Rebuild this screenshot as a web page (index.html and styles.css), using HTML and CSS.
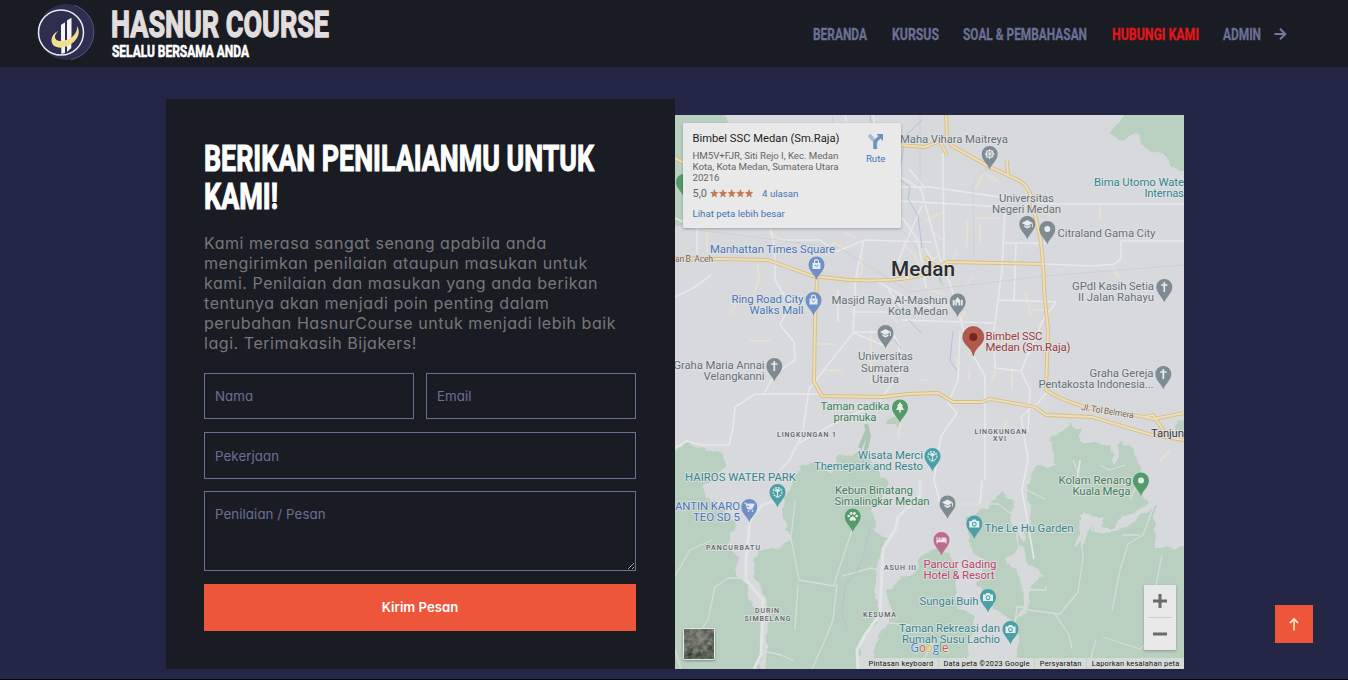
FILE: index.html
```html
<!DOCTYPE html>
<html lang="id">
<head>
<meta charset="utf-8">
<title>Hasnur Course</title>
<link rel="stylesheet" href="styles.css">
</head>
<body>
<header class="navbar">
  <a class="brand">
    <svg class="brand-logo" viewBox="0 0 56 56">
      <circle cx="28" cy="28" r="28" fill="#2d2f52"/>
      <path d="M36 1.200A28 28 0 0 1 33 55.500" fill="none" stroke="#555975" stroke-width="1"/>
      <circle cx="23" cy="28.500" r="22.500" fill="#2d2e50" stroke="#eeeef2" stroke-width="1.500"/>
      <path d="M23.300 50V21L27 18.500V49ZM29 48V16.500L33.300 14V44Z" fill="#f5f5f8"/>
      <path d="M23 21L27 18.500V35L23 37ZM29 17L33.300 14V32L29 35Z" fill="#f5f5f8"/>
      <path d="M20.500 27C12 30 10.500 42 20.500 43.500C31 45 46 33 39 22C40 31 31 36.500 23 37C16 37.500 15 31 20.500 27Z" fill="#efdf91"/>
    </svg>
    <svg class="brand-text" viewBox="0 0 220 56">
      <text class="brand-name" x="-1" y="33" textLength="218" lengthAdjust="spacingAndGlyphs">HASNUR COURSE</text>
      <text class="brand-tag" x="0" y="53" textLength="137" lengthAdjust="spacingAndGlyphs">SELALU BERSAMA ANDA</text>
    </svg>
  </a>
  <nav class="menu">
    <a><svg width="54" height="24"><text y="18" textLength="54" lengthAdjust="spacingAndGlyphs">BERANDA</text></svg></a>
    <a><svg width="47" height="24"><text y="18" textLength="47" lengthAdjust="spacingAndGlyphs">KURSUS</text></svg></a>
    <a><svg width="124" height="24"><text y="18" textLength="124" lengthAdjust="spacingAndGlyphs">SOAL &amp; PEMBAHASAN</text></svg></a>
    <a class="active"><svg width="87" height="24"><text y="18" textLength="87" lengthAdjust="spacingAndGlyphs">HUBUNGI KAMI</text></svg></a>
    <a class="admin"><svg width="38" height="24"><text y="18" textLength="38" lengthAdjust="spacingAndGlyphs">ADMIN</text></svg>
      <svg class="arrow" width="12" height="12" viewBox="0 0 12 12"><path d="M.5 6H11M6 .7L11.300 6L6 11.300"/></svg></a>
  </nav>
</header>
<main class="contact">
  <section class="panel">
    <h1><svg width="432" height="76">
      <text x="0" y="34" textLength="390" lengthAdjust="spacingAndGlyphs">BERIKAN PENILAIANMU UNTUK</text>
      <text x="0" y="72" textLength="74" lengthAdjust="spacingAndGlyphs">KAMI!</text></svg></h1>
    <p class="lead">Kami merasa sangat senang apabila anda<br>mengirimkan penilaian ataupun masukan untuk<br>kami. Penilaian dan masukan yang anda berikan<br>tentunya akan menjadi poin penting dalam<br>perubahan HasnurCourse untuk menjadi lebih baik<br>lagi. Terimakasih Bijakers!</p>
    <form class="form">
      <div class="row"><input placeholder="Nama"><input placeholder="Email"></div>
      <input class="job" placeholder="Pekerjaan">
      <textarea placeholder="Penilaian / Pesan"></textarea>
      <button type="button">Kirim Pesan</button>
    </form>
  </section>
  <section class="map">
    <svg class="map-canvas" viewBox="675 115 509 554">
      <defs>
        <filter id="coast" x="-5%" y="-5%" width="110%" height="110%"><feTurbulence type="fractalNoise" baseFrequency=".09" numOctaves="2" seed="4"/><feDisplacementMap in="SourceGraphic" scale="9" xChannelSelector="R" yChannelSelector="G"/></filter>
        <path id="pin" d="M0 15.500C-1.500 10-8 6.500-8 0A8 8 0 0 1 8 0C8 6.500 1.500 10 0 15.500Z"/>
        <path id="cross" d="M0-5V5M-3.200-2H3.200" stroke="#e8ebec" stroke-width="1.700"/>
        <path id="hat" d="M-5.500-1L0-4L5.500-1L0 2ZM-3 1V3L0 4.500L3 3V1L0 2.800ZM4.600-.5H5.500V3H4.600Z" fill="#e8ebec"/>
        <g id="bag" fill="#e4e9f2"><path d="M-4-1.500H4V4.500H-4Z"/><path d="M-2-1.500V-3A2 1.800 0 0 1 2-3V-1.500" fill="none" stroke="#e4e9f2" stroke-width="1.200"/><path d="M-1.800.5Q0 3 1.800.5" fill="none" stroke="#6f8fc5"/></g>
        <g id="camera"><path d="M-5-2.500H-2.500L-1.500-4H1.500L2.500-2.500H5V4H-5Z" fill="#e3eeee"/><circle cy=".7" r="1.900" fill="none" stroke="#4ba0a8" stroke-width="1.100"/></g>
        <g id="palm" fill="none" stroke="#dcecec" stroke-width="1.100"><circle r="4.500" stroke-dasharray="2 1"/><path d="M0 5V-3M0 0L-3-2M0 0L3-2M-2-4L0-1L2-4M-2 5H2"/></g>
      </defs>
      <rect x="675" y="115" width="509" height="554" fill="#d7d9dc"/>
      <g fill="#b9cfc0" filter="url(#coast)">
        <path d="M665 105H724L728 128V225H665Z"/>
        <path d="M1126 105L1122 118L1109 134L1119 139L1138 134L1144 148L1161 152L1178 171L1195 170V105Z"/>
        <path d="M665 456L687 442L706 450L724 454L726 466L715 479L704 488L710 500L735 521L728 544L738 555L737 575L747 585L751 605L763 614L759 675H665Z"/>
        <path d="M790 486L800 466L816 463L832 472L838 457L858 452L873 466L888 485L873 510L876 532L888 538L878 561L874 589L881 616L861 641L855 680H765L768 620L766 594L752 575L758 552L778 548L791 538L782 515Z"/>
        <path d="M878 635L895 614L886 594L894 580L914 572L925 551L943 548L958 568L956 605L973 616L965 680H868Z"/>
        <path d="M966 518L987 509L1000 491L1013 501L1010 520L1023 544L1006 560L1020 579L1025 607L1010 620L989 605L977 584L984 564L970 548Z"/>
        <path d="M1070 424L1080 428L1081 441L1110 445L1115 464L1120 443L1132 446L1141 470L1137 487L1147 503L1140 512L1122 514L1112 530L1082 520L1075 546L1085 565L1076 550L1086 522L1103 533L1126 529L1155 503L1155 548L1195 547V680H1015L1018 641L1010 620L1028 612L1030 585L1044 575L1031 565L1021 544L1032 517L1025 493L1034 468L1057 464L1050 440Z"/>
        <path d="M1080 516L1090 513L1106 520L1100 528L1090 525L1081 548Z" fill="#d7d9dc"/>
        <path d="M886 418L898 415L902 426H886ZM1178 420H1190V434H1175ZM936 280L940 276L941 286Z"/>
      </g>
      <path d="M866 424L869 436L865 453M860 448L867 431" stroke="#a9c5b2" stroke-width="4" fill="none"/>
      <g class="blocks">
        <path d="M758 265L759 280L750 305M740 299L730 314M770 232L781 239L783 243M707 252V230M817 249L835 243L846 250M845 233L855 238M862 248V272L852 285M903 244L914 254L921 270M749 341H771M828 371H838M871 329V385M865 356L875 361M835 344H814M842 370H823M885 311L899 323M921 380H928M901 420L898 438M983 174L975 190M986 174L997 181M925 220L944 212M930 228L942 240M967 221V247M976 218H1000M980 224V242M957 250L950 269M940 255L929 261M973 276L964 287M1025 292L1031 316M965 311L960 324M1033 310H1047M940 309L955 303M930 289L945 295M969 370V380M996 370L991 383M1012 367V390M1100 202V220M1112 266L1119 278M1160 461L1170 450M955 357L960 371M900 350L910 354M1007 420L1003 432M862 198V210M862 130L871 125M770 172L790 165"/>
      </g>
      <g class="roads">
        <path d="M697 227V254M770 228L775 248V280L790 305L780 325L794 342L795 360L774 375L764 394M675 448L687 441L701 445L729 445L733 428L735 407L755 394H822M775 240H820L835 252L865 240L932 242M864 240L856 276L853 333L809 389L803 430L799 441L789 461L780 470M799 443L837 422L878 403L900 373L899 344L892 332H853M854 333L885 346M675 297L695 287L711 275M845 115L849 135L865 172L869 190L904 220L918 240L926 288M873 115L882 166L921 189L941 262L949 281L958 309L964 332L974 357L985 376V480M901 187L930 187L1048 204H1184M901 201L1005 207L1002 270L994 330L995 368L1021 371L1043 320L1056 302L998 300M943 153L944 260M1005 243L1048 243M1016 243L1014 300M1045 264L1092 266L1115 264L1121 258V241H1184M909 169L925 188M901 320L994 323M960 332L958 380L948 403L957 413L941 436L934 480L940 503M1035 404L1021 417L1028 459L1022 490L1034 559M1021 371L1030 390L1028 432M1048 391L1033 409M875 280L906 298L936 310M675 218L700 230M891 279L907 240L922 205M925 248L936 265M982 481L980 504H952M1080 460L1076 490M838 290V322M852 312L885 312M888 289L904 312L917 318"/>
        <path class="major" d="M777 500L762 505L750 520L746 560V580L763 600L761 655L754 669M920 480L920 496L898 517L896 528L883 549L880 614L865 635L857 650L858 669"/>
        <path class="country" d="M746 578H728L715 587L708 620L696 637M675 576L690 550L712 540M763 651L781 655L794 661M795 500L791 538L799 580L834 586L836 578L852 530M837 584L833 620L825 640L812 669M842 576L870 568L880 570M798 585L795 630M880 622L910 625M921 665L933 642M955 532L958 608L987 614L1010 620M950 504L998 504L1014 516L1027 607H1017L1013 640M1027 610L1060 614L1078 592L1083 558L1080 520M1028 590H1046V586M1055 614L1069 635L1072 649M1096 640L1089 665M1112 611L1120 570L1128 544L1143 535L1155 503M1085 513L1092 530L1103 533M1122 535L1139 535M1103 637L1140 649L1150 640L1160 643M1139 480L1130 500M1073 460L1079 475M1100 465L1109 470L1125 465M1162 555L1155 590M1080 516L1100 520M1045 499L1025 489M675 650L681 669"/>
      </g>
      <g class="water"><path d="M870 115L873 139L891 162L900 180L910 187L908 199L918 216L922 248M922 120L905 136L900 171M953 331L950 361L957 371M870 526L865 551L856 573L845 585L842 612L847 630M861 446L863 462L875 474M909 320L921 333M895 305L916 318M895 340L901 349"/></g>
      <g class="rail"><path d="M682 228L840 248L910 292L1045 276L1184 265M974 257L973 185Q978 168 990 169M832 115L835 143L918 250M920 115V185"/></g>
      <g class="highway-edge"><path id="hw" d="M675 258L768 260L812 276L850 280Q902 282 925 274L948 262L1043 264M817 278L815 320L814 382L822 396L882 397L908 394L938 393L953 402L982 402L990 399L1035 407L1046 415L1092 417L1152 435L1184 440M946 115L947 138L952 146L990 167L1020 181Q1032 189 1033 207L1040 236Q1044 264 1044 290L1048 330L1046 390Q1058 399 1085 407L1145 417L1153 419L1184 413M1145 417L1153 415L1165 433M899 145L925 147L940 141L947 155M675 158L684 163M1007 161L1008 176M925 257L940 270"/></g>
      <use href="#hw" class="highway"/>

      <g class="labels">
        <text x="900" y="143" textLength="108">Maha Vihara Maitreya</text>
        <text x="999" y="201.500" textLength="55">Universitas</text><text x="992" y="213" textLength="69">Negeri Medan</text>
        <text x="1057.500" y="237" textLength="98">Citraland Gama City</text>
        <text x="1072" y="290" textLength="82">GPdI Kasih Setia</text><text x="1078" y="301" textLength="76">II Jalan Rahayu</text>
        <text x="831.500" y="304" textLength="116">Masjid Raya Al-Mashun</text><text x="888" y="315" textLength="60">Kota Medan</text>
        <text x="858" y="360" textLength="55">Universitas</text><text x="861" y="371.500" textLength="48">Sumatera</text><text x="872" y="382.500" textLength="27">Utara</text>
        <text x="673.500" y="368.500" textLength="91">Graha Maria Annai</text><text x="703.500" y="379.500" textLength="61">Velangkanni</text>
        <text x="1089.500" y="376.500" textLength="64">Graha Gereja</text><text x="1038.500" y="387.500" textLength="115">Pentakosta Indonesia...</text>
        <g class="shop"><text x="710" y="252.500" textLength="125">Manhattan Times Square</text><text x="731.500" y="302.500" textLength="72">Ring Road City</text><text x="749.500" y="314" textLength="54">Walks Mall</text><text x="675" y="510" textLength="65">ANTIN KARO</text><text x="693" y="521" textLength="47">TEO SD 5</text></g>
        <g class="teal"><text x="1094" y="185.500" textLength="90">Bima Utomo Wate</text><text x="1144.500" y="197" textLength="39.500">Internas</text><text x="858" y="458.500" textLength="65">Wisata Merci</text><text x="814" y="470" textLength="109">Themepark and Resto</text><text x="685" y="481" textLength="111">HAIROS WATER PARK</text><text x="984.500" y="531.500" textLength="89">The Le Hu Garden</text><text x="919.500" y="605" textLength="59">Sungai Buih</text><text x="899" y="631.500" textLength="101">Taman Rekreasi dan</text><text x="902" y="643" textLength="98">Rumah Susu Lachio</text></g>
        <g class="park"><text x="820.500" y="410" textLength="69">Taman cadika</text><text x="833.500" y="421" textLength="43">pramuka</text><text x="1058.500" y="483.500" textLength="73">Kolam Renang</text><text x="1072.500" y="495" textLength="58">Kuala Mega</text><text x="835" y="493.500" textLength="78">Kebun Binatang</text><text x="834.500" y="505" textLength="95">Simalingkar Medan</text></g>
        <g class="hotel"><text x="923.500" y="567.500" textLength="73">Pancur Gading</text><text x="923.500" y="578.500" textLength="71">Hotel &amp; Resort</text></g>
        <g class="place"><text x="985.500" y="339.500" textLength="57">Bimbel SSC</text><text x="985.500" y="351" textLength="85">Medan (Sm.Raja)</text></g>
        <g class="area"><text x="777" y="437" textLength="59">LINGKUNGAN 1</text><text x="974.500" y="434" textLength="52">LINGKUNGAN</text><text x="993" y="441" textLength="13">XVI</text><text x="706" y="550" textLength="54">PANCURBATU</text><text x="884" y="569.500" textLength="32">ASUH III</text><text x="755" y="613" textLength="24">DURIN</text><text x="744.500" y="620.500" textLength="46">SIMBELANG</text><text x="863" y="616.500" textLength="33">KESUMA</text></g>
        <g class="street"><text x="675" y="262" textLength="38">an B. Aceh</text><text x="1081" y="410" textLength="53" transform="rotate(9 1081 410)">Jl. Tol Belmera</text></g>
        <text class="town" x="1151" y="437" textLength="33">Tanjun</text>
        <text class="city" x="891" y="276" textLength="64">Medan</text>
      </g>
      <g fill="#7e8b92">
        <g transform="translate(989.700 154)"><use href="#pin"/><g fill="none" stroke="#e8ebec"><circle r="3.500" stroke-width="1.200"/><path d="M-5 0H5M0-5V5M-3.500-3.500L3.500 3.500M3.500-3.500L-3.500 3.500" stroke-width=".9"/></g></g>
        <g transform="translate(1027.300 224)"><use href="#pin"/><use href="#hat"/></g>
        <g transform="translate(1047.300 229)"><use href="#pin"/><circle r="3" fill="#e8ebec"/></g>
        <g transform="translate(1164.300 287)"><use href="#pin"/><use href="#cross"/></g>
        <g transform="translate(957.700 301.500)"><use href="#pin"/><path d="M-5 4V-1L-4-2L-3-1V4ZM-2.300 4V-1.500L0-4.500L2.300-1.500V4H.8V1H-.8V4ZM3 4V-1L4-2L5-1V4Z" fill="#e8ebec"/></g>
        <g transform="translate(885.500 333)"><use href="#pin"/><use href="#hat"/></g>
        <g transform="translate(774.300 366)"><use href="#pin"/><use href="#cross"/></g>
        <g transform="translate(1163.300 374)"><use href="#pin"/><use href="#cross"/></g>
        <g transform="translate(947.500 503.500)"><use href="#pin"/><use href="#hat"/></g>
      </g>
      <g fill="#6f8fc5">
        <g transform="translate(816.500 264.500)"><use href="#pin"/><use href="#bag"/></g>
        <g transform="translate(813.500 300)"><use href="#pin"/><use href="#bag"/></g>
        <g transform="translate(749.300 507)"><use href="#pin"/><path d="M-5-4H-3.500L-1.500 2H3.500M-3-3H5L3.500.500H-2Z" fill="#e4e9f2" stroke="#e4e9f2" stroke-width=".8"/><path d="M-1.500 4H0M2.500 4H4" stroke="#e4e9f2" stroke-width="1.500"/></g>
      </g>
      <g fill="#4ba0a8">
        <g transform="translate(932.500 456)"><use href="#pin"/><use href="#palm"/></g>
        <g transform="translate(777.500 492)"><use href="#pin"/><use href="#palm"/></g>
        <g transform="translate(974.300 523.500)"><use href="#pin"/><use href="#camera"/></g>
        <g transform="translate(988 597)"><use href="#pin"/><use href="#camera"/></g>
        <g transform="translate(1010.500 629)"><use href="#pin"/><use href="#camera"/></g>
      </g>
      <g fill="#549a6b">
        <g transform="translate(684 182)"><use href="#pin"/></g>
        <g transform="translate(900 407.500)"><use href="#pin"/><path d="M0-5.500L3-1.500H2L4 2.500H.8V5H-.8V2.500H-4L-2-1.500H-3Z" fill="#e2ede5"/></g>
        <g transform="translate(852.700 516.500)"><use href="#pin"/><g fill="#e2ede5"><path d="M-3.500 3.500Q-3 1 0-.5Q3 1 3.500 3.500Q2 5 0 3.700Q-2 5-3.500 3.500Z"/><circle cx="-4" cy="-.5" r="1.300"/><circle cx="-1.600" cy="-3" r="1.400"/><circle cx="1.600" cy="-3" r="1.400"/><circle cx="4" cy="-.5" r="1.300"/></g></g>
        <g transform="translate(1141 480.500)"><use href="#pin"/><circle r="3" fill="#e2ede5"/></g>
      </g>
      <g transform="translate(941.500 540)" fill="#bd6c8b"><use href="#pin"/><path d="M-5-3H-4V1H4V3.500H5V-1Q5-2.500 3.500-2.500H0V0H-4V3.500H-5Z" fill="#f0e3e8"/><path d="M-5 1H5V2.300H-5Z" fill="#f0e3e8"/><circle cx="-2" cy="-1.200" r="1.200" fill="#f0e3e8"/></g>
      <path d="M973.300 356C972 347 962.800 345 962.800 337A10.500 10.500 0 0 1 983.800 337C983.800 345 974.600 347 973.300 356Z" fill="#b4574d" stroke="#9c4c45" stroke-width=".7"/>
      <circle cx="973.300" cy="337" r="4" fill="#742722"/>
      <text class="google" x="910.500" y="652" textLength="38" lengthAdjust="spacingAndGlyphs"><tspan fill="#4877cf">G</tspan><tspan fill="#d2564c">o</tspan><tspan fill="#dfaf36">o</tspan><tspan fill="#4877cf">g</tspan><tspan fill="#4a9a5f">l</tspan><tspan fill="#d2564c">e</tspan></text>
    </svg>
    <div class="info">
      <div class="info-main">
        <div class="info-title">Bimbel SSC Medan (Sm.Raja)</div>
        <div class="info-address">HM5V+FJR, Siti Rejo I, Kec. Medan<br>Kota, Kota Medan, Sumatera Utara<br>20216</div>
        <div class="rating"><span>5,0</span>
          <svg width="44" height="9" viewBox="0 0 44 9"><defs><path id="star" d="M4.300 0L5.500 3L8.600 3.300L6.200 5.300L7 8.400L4.300 6.700L1.600 8.400L2.400 5.300L0 3.300L3.100 3Z"/></defs><g fill="#c07c50"><use href="#star"/><use href="#star" x="8.700"/><use href="#star" x="17.400"/><use href="#star" x="26.100"/><use href="#star" x="34.800"/></g></svg>
          <a>4 ulasan</a></div>
        <a class="larger">Lihat peta lebih besar</a>
      </div>
      <a class="route"><svg width="16" height="17" viewBox="0 0 16 17"><path d="M1 2L7.500 9V16" fill="none" stroke="#a1bbd8" stroke-width="3.600"/><path d="M7 16V10Q7 8 12 4" fill="none" stroke="#6792c4" stroke-width="3.400"/><path d="M8.500 1H15V8Z" fill="#6792c4"/></svg><span>Rute</span></a>
    </div>
    <svg class="satellite" viewBox="0 0 32 32"><defs><filter id="ground" x="0" y="0" width="1" height="1" color-interpolation-filters="sRGB"><feTurbulence type="fractalNoise" baseFrequency=".2" numOctaves="4"/><feColorMatrix values=".5 .1 0 0 .06 .5 .1 0 0 .09 .5 .1 0 0 .05 0 0 0 0 1"/></filter><radialGradient id="clearing" cx=".5" cy=".2" r=".6"><stop stop-color="#a39a90" stop-opacity=".5"/><stop offset="1" stop-color="#a39a90" stop-opacity="0"/></radialGradient></defs><rect width="32" height="32" rx="2" fill="#e5e8e5"/><rect x="1" y="1" width="30" height="30" fill="#555" filter="url(#ground)"/><rect x="1" y="1" width="30" height="30" fill="url(#clearing)"/></svg>
    <div class="zoom"><span><svg viewBox="0 0 14 14"><path d="M0 7H14M7 0V14"/></svg></span><i></i><span><svg viewBox="0 0 14 14"><path d="M0 7H14"/></svg></span></div>
    <div class="credits"><span>Pintasan keyboard</span><span>Data peta ©2023 Google</span><span>Persyaratan</span><span>Laporkan kesalahan peta</span></div>
  </section>
</main>
<a class="to-top"><svg width="10" height="13" viewBox="0 0 10 13"><path d="M5 12.500V2" stroke="#ffd08b" stroke-width="1.900"/><path d="M1 5L5 1L9 5" fill="none" stroke="#fff0e8" stroke-width="1.700"/></svg></a>
</body>
</html>
```
FILE: styles.css
```css
* { box-sizing: border-box; }
body { margin: 0; height: 680px; overflow: hidden; background: #242645; border-bottom: 1px solid #050509; font-family: Inter, "Open Sans", sans-serif; font-feature-settings: "cv11"; }
svg { display: block; overflow: visible; }
.navbar { height: 67px; padding: 4px 62px 7px 38px; background: #1a1c24; display: flex; justify-content: space-between; align-items: center; font-family: Roboto, sans-serif; }
.brand { display: flex; gap: 18px; }
.brand-logo { width: 56px; height: 56px; }
.brand-text { width: 220px; height: 56px; font-weight: 700; }
.brand-name { font-size: 36.5px; fill: #e2dedd; stroke: #e2dedd; stroke-width: 1.3px; }
.brand-tag { font-size: 16px; fill: #fff; stroke: #fff; stroke-width: .6px; }
.menu { display: flex; gap: 24.5px; padding-top: 4px; fill: #6b7096; stroke: #6b7096; stroke-width: .3px; font-size: 16.3px; font-weight: 700; }
.menu .active { fill: #e81417; stroke: #e81417; }
.admin { display: flex; align-items: center; gap: 13px; }
.arrow { fill: none; stroke: #7479a0; stroke-width: 2px; }
.contact { display: grid; grid-template-columns: 509px 509px; margin: 32px 0 0 166px; height: 570px; }
.panel { background: #1a1c24; padding: 38px 39px 38px 38px; }
h1 { margin: 0; font: 700 36.5px Roboto, sans-serif; fill: #fff; stroke: #fff; stroke-width: 1.1px; }
.lead { margin: 20px 0; color: #777; font-size: 16px; line-height: 20px; letter-spacing: .55px; white-space: nowrap; }
.form { display: flex; flex-direction: column; }
.row { display: grid; grid-template-columns: 1fr 1fr; gap: 12px; margin-bottom: 13px; }
input, textarea { width: 100%; height: 46px; margin: 0; padding: 0 10px; border: 1px solid #6b7096; border-radius: 0; outline: 0; background: transparent; font: 13.3px Inter, sans-serif; font-feature-settings: "cv11"; letter-spacing: .08px; color: #6b7096; }
input::placeholder, textarea::placeholder { color: #6b7096; opacity: 1; }
.job { height: 47px; margin-bottom: 12px; }
textarea { height: 80px; padding-top: 14px; margin-bottom: 13px; display: block; }
button { height: 47px; border: 0; background: #ee563b; color: #fff; font: 600 13.2px Inter, sans-serif; font-feature-settings: "cv11"; padding-bottom: 2px; }
.map { position: relative; margin-top: 16px; height: 554px; font-family: Roboto, sans-serif; overflow: hidden; font-feature-settings: normal; }
.map-canvas { width: 509px; height: 554px; overflow: hidden; }
.blocks { fill: none; stroke: #e3dfd2; stroke-width: 2.2px; }
.roads { fill: none; stroke: #e6e8ea; stroke-width: 1.6px; stroke-linejoin: round; }
.roads .major { stroke-width: 3px; stroke: #e2e5e5; }
.roads .country { stroke: #d5ded8; stroke-width: 1.3px; }
.water { fill: none; stroke: #b3c1d9; stroke-width: 1px; }
.rail { fill: none; stroke: #c8cbd0; stroke-width: .7px; }
.highway-edge { fill: none; stroke: #dbbd7c; stroke-width: 3.800px; stroke-linejoin: round; }
.highway-edge + .highway { fill: none; stroke: #eadfc0; stroke-width: 2px; }
.highway-edge path { stroke: inherit; }
.labels { font-size: 11.4px; fill: #667177; stroke: #e2e4e5; stroke-width: 2px; stroke-opacity: .75; paint-order: stroke; stroke-linejoin: round; }
.shop { fill: #4a76b9; }
.teal { fill: #35868f; }
.park { fill: #42815a; }
.hotel { fill: #b8456f; }
.place { fill: #9b3a40; }
.area { font-size: 7px; font-weight: 500; fill: #5f6468; }
.street { font-size: 8.8px; fill: #786453; }
.town { fill: #3a3a3a; }
.city { font-size: 20.8px; font-weight: 500; fill: #2b2d2f; }
.google { font: 500 12px "Open Sans", sans-serif; stroke: #e5ece7; stroke-width: 1px; paint-order: stroke; }
.info { position: absolute; left: 8px; top: 8px; width: 218px; height: 105px; padding: 9px 15.500px 0 9.5px; background: #e9e9e9; box-shadow: 0 1px 3px #0004; border-radius: 1px; display: flex; justify-content: space-between; color: #666; font-size: 9.7px; white-space: nowrap; }
.info-title { font-size: 11.2px; line-height: 13px; color: #222; letter-spacing: .02px; }
.info-address { margin-top: 5px; line-height: 11px; letter-spacing: -.05px; }
.info a { color: #4474b6; }
.rating { display: flex; align-items: center; gap: 2.5px; margin-top: 4px; line-height: 13px; }
.rating span { font-size: 11px; }
.rating a { margin-left: 6px; }
.larger { display: block; margin-top: 8px; line-height: 12px; }
.route { display: flex; flex-direction: column; align-items: center; gap: 3px; line-height: 12px; padding-top: 1px; }
.satellite { position: absolute; left: 8px; top: 513px; width: 32px; height: 32px; filter: drop-shadow(0 1px 1px #0005); }
.zoom { position: absolute; right: 8px; bottom: 19px; width: 32px; height: 65px; background: #e9e9e9; border-radius: 1px; box-shadow: 0 1px 3px #0004; display: flex; flex-direction: column; align-items: center; }
.zoom span { flex: 1; display: flex; align-items: center; }
.zoom svg { width: 14px; height: 14px; stroke: #6b6b6b; stroke-width: 3px; }
.zoom i { height: 1px; width: 24px; background: #cfcfcf; }
.credits { position: absolute; right: 0; bottom: 0; height: 11px; display: flex; background: #d5dcd8; font-size: 7.4px; letter-spacing: .24px; line-height: 11px; color: #111; white-space: nowrap; }
.credits span { padding: 0 4.500px; }
.credits span + span { border-left: 1px solid #c1d1c6; }
.to-top { position: absolute; left: 1275px; top: 605px; width: 38px; height: 38px; background: #ee563b; display: flex; align-items: center; justify-content: center; }
```
